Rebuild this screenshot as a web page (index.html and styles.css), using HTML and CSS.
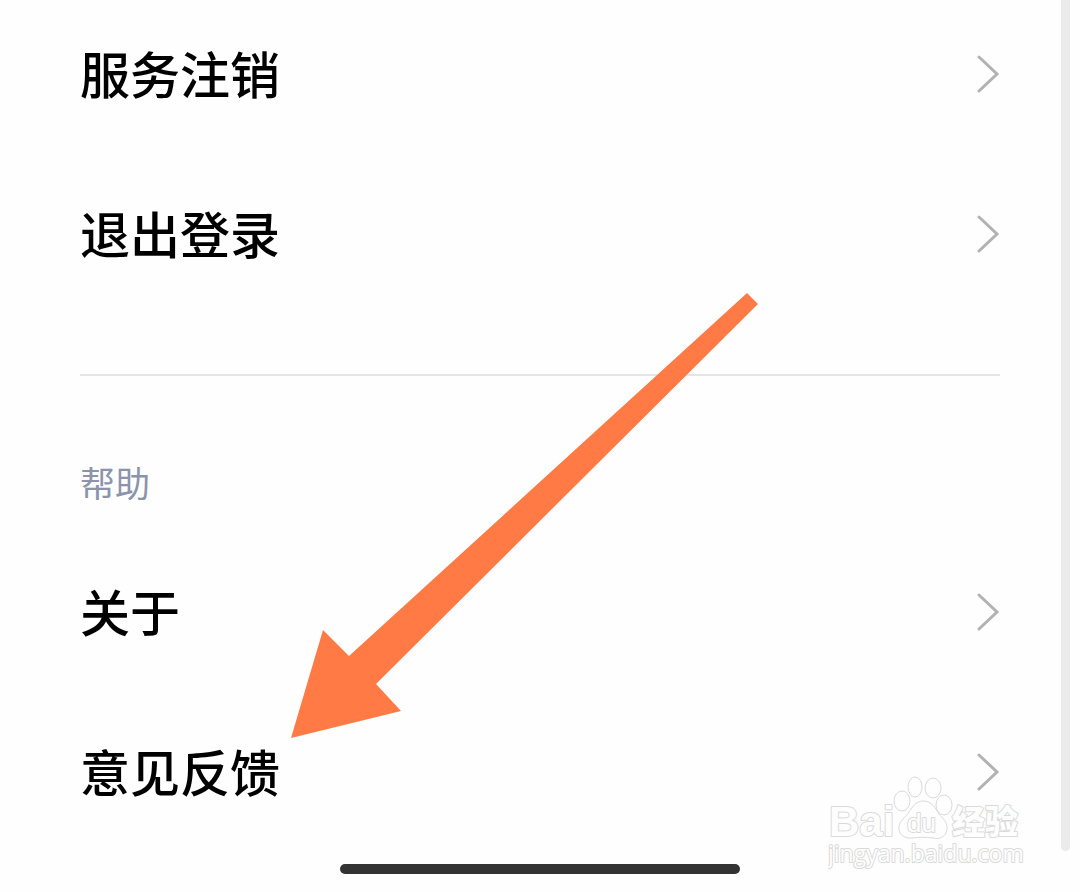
FILE: index.html
```html
<!DOCTYPE html>
<html lang="zh-CN">
<head>
    <meta charset="UTF-8">
    <title>设置</title>
    <meta name="viewport" content="width=device-width, initial-scale=1.0">
    <link rel="stylesheet" href="styles.css">
</head>
<body>

    <main class="settings">
        <!-- Account section -->
        <nav class="menu">
            <a class="menu-item" href="#cancel">
                服务注销
                <svg class="chevron" viewBox="0 0 24 40" aria-hidden="true"><path d="M3 3 L21 20 L3 37"/></svg>
            </a>
            <a class="menu-item" href="#logout">
                退出登录
                <svg class="chevron" viewBox="0 0 24 40" aria-hidden="true"><path d="M3 3 L21 20 L3 37"/></svg>
            </a>
        </nav>

        <hr class="divider">

        <!-- Help section -->
        <h2 class="section-title">帮助</h2>
        <nav class="menu">
            <a class="menu-item" href="#about">
                关于
                <svg class="chevron" viewBox="0 0 24 40" aria-hidden="true"><path d="M3 3 L21 20 L3 37"/></svg>
            </a>
            <a class="menu-item" href="#feedback">
                意见反馈
                <svg class="chevron" viewBox="0 0 24 40" aria-hidden="true"><path d="M3 3 L21 20 L3 37"/></svg>
            </a>
        </nav>
    </main>

    <div class="home-bar"></div>
    <div class="scrollbar"></div>

    <!-- Arrow pointing at the feedback entry -->
    <svg class="arrow" viewBox="0 0 468 446" aria-hidden="true">
        <path d="M457 0 L468 11 L86 391 L111 418 L1 445 L33 337 L59 363 Z"/>
    </svg>

    <!-- Watermark -->
    <svg class="watermark" viewBox="0 0 200 100">
        <text class="wm-latin" x="1" y="66">Bai</text>
        <ellipse cx="74" cy="31" rx="8" ry="10"/>
        <ellipse cx="87" cy="17" rx="7" ry="10"/>
        <ellipse cx="105" cy="18" rx="8" ry="10"/>
        <ellipse cx="116" cy="35" rx="8" ry="10"/>
        <path d="M95 31 C104 31 107 38 111 44 C115 49 119 51 119 58 C119 66 112 70 105 68 C98 67 91 67 85 68 C76 69 70 64 71 57 C72 50 77 48 81 42 C85 36 88 31 95 31 Z"/>
        <text class="wm-du" x="79" y="62">du</text>
        <text class="wm-cjk" x="124" y="64">经验</text>
        <text class="wm-url" x="0" y="92">jingyan.baidu.com</text>
    </svg>

</body>
</html>
```
FILE: styles.css
```css
body {
    margin: 0;
    position: relative;
    background-color: #fefefe;
    color: #000000;
    font-family: "Noto Sans CJK SC", sans-serif;
}
.settings {
    padding: 42px 80px 60px;
}
.menu {
    display: flex;
    flex-direction: column;
    gap: 96px;
}
.menu-item {
    display: flex;
    justify-content: space-between;
    align-items: flex-start;
    min-height: 64px;
    color: #000000;
    font-size: 50px;
    font-weight: 500;
    line-height: 60px;
    text-decoration: none;
}
.chevron {
    width: 24px;
    height: 40px;
    margin-top: 12px;
    fill: none;
    stroke: #b2b2b2;
    stroke-width: 3;
    stroke-linecap: round;
}
.divider {
    height: 2px;
    margin: 108px 0 84px;
    border: 0;
    background-color: #e5e5e5;
}
.section-title {
    margin: 0 0 76px;
    color: #8c93ab;
    font-size: 35px;
    font-weight: 400;
    line-height: 44px;
}
.home-bar {
    width: 37%;
    height: 10px;
    margin: 0 auto 18px;
    border-radius: 5px;
    background-color: #333333;
}
.scrollbar {
    position: absolute;
    top: 0;
    right: 10px;
    width: 9px;
    height: 851px;
    border-radius: 0 0 5px 5px;
    background-color: #ebebeb;
}
/* Overlays */
.arrow {
    position: absolute;
    top: 293px;
    left: 290px;
    width: 468px;
    height: 446px;
    fill: #ff7a45;
    pointer-events: none;
}
.watermark {
    position: absolute;
    top: 770px;
    right: 52px;
    width: 200px;
    height: 100px;
    fill: #fefefe;
    stroke: #dadada;
    stroke-width: 1;
    pointer-events: none;
}
.watermark text {
    stroke-width: 2;
    stroke-linejoin: round;
    paint-order: stroke;
}
.wm-latin {
    font: bold 42px "Liberation Sans", Arial, sans-serif;
}
.wm-du {
    font: 26px "Liberation Sans", Arial, sans-serif;
}
.wm-cjk {
    font: 900 33px "Noto Sans CJK SC", sans-serif;
}
.wm-url {
    font: 23px "Open Sans", sans-serif;
}
```
